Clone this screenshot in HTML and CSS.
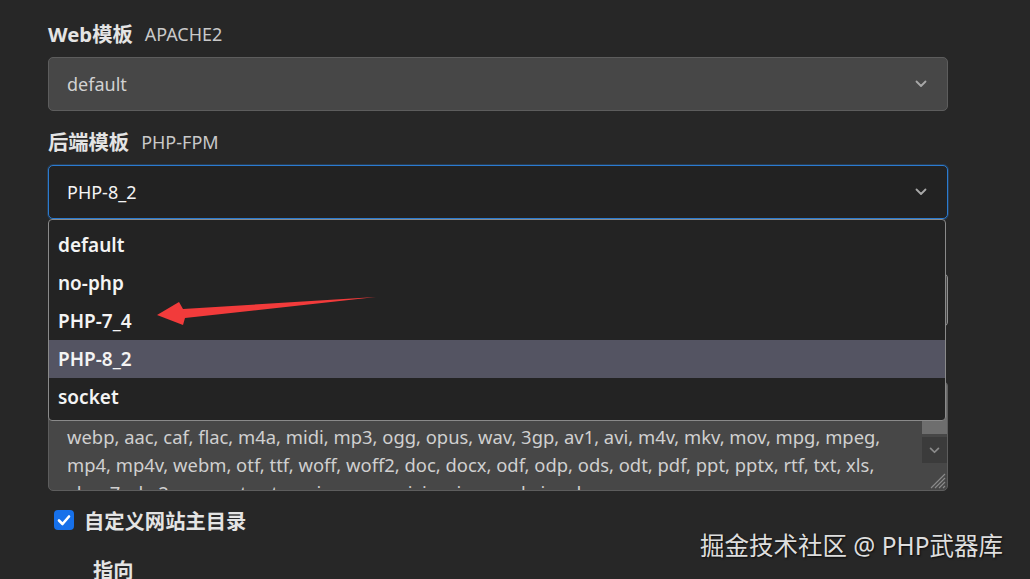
FILE: index.html
```html
<!DOCTYPE html>
<html lang="zh">
<head>
<meta charset="utf-8">
<title>站点配置</title>
<link rel="stylesheet" href="styles.css">
</head>
<body>
<main class="form">
  <div class="field">
    <div class="label"><b>Web模板</b><span class="hint">APACHE2</span></div>
    <div class="select select-plain">
      <span class="value">default</span>
      <svg class="chev" viewBox="0 0 12 8" width="12" height="8"><path d="M1.5 1.5 L6 6 L10.5 1.5" fill="none" stroke="currentColor" stroke-width="1.8" stroke-linecap="round" stroke-linejoin="round"/></svg>
    </div>
  </div>

  <div class="field">
    <div class="label"><b>后端模板</b><span class="hint">PHP-FPM</span></div>
    <div class="select-wrap">
      <div class="select select-focus">
        <span class="value">PHP-8_2</span>
        <svg class="chev" viewBox="0 0 12 8" width="12" height="8"><path d="M1.5 1.5 L6 6 L10.5 1.5" fill="none" stroke="currentColor" stroke-width="1.8" stroke-linecap="round" stroke-linejoin="round"/></svg>
      </div>
      <ul class="menu">
        <li>default</li>
        <li>no-php</li>
        <li>PHP-7_4</li>
        <li class="active">PHP-8_2</li>
        <li>socket</li>
      </ul>
    </div>
  </div>

  <div class="field">
    <div class="label"></div>
    <div class="input"></div>
  </div>

  <div class="field">
    <div class="label"></div>
    <div class="textarea">
      <div class="ta-text">
        <div class="line">webp, aac, caf, flac, m4a, midi, mp3, ogg, opus, wav, 3gp, av1, avi, m4v, mkv, mov, mpg, mpeg,</div>
        <div class="line">mp4, mp4v, webm, otf, ttf, woff, woff2, doc, docx, odf, odp, ods, odt, pdf, ppt, pptx, rtf, txt, xls,</div>
        <div class="line">xlsx, 7z, bz2, gz, rar, tar, tgz, zip, exe, msi, iso, img, apk, jar, dmg</div>
      </div>
      <div class="scrollbar">
        <div class="sb-thumb"></div>
        <div class="sb-btn">
          <svg viewBox="0 0 12 8" width="11" height="7"><path d="M1.5 1.5 L6 6 L10.5 1.5" fill="none" stroke="currentColor" stroke-width="2" stroke-linecap="round" stroke-linejoin="round"/></svg>
        </div>
      </div>
      <svg class="grip" viewBox="0 0 20 20" width="20" height="20"><path d="M19 5 L5 19 M19 9 L9 19 M19 13 L13 19 M19 17 L17 19" stroke="#8a8a8a" stroke-width="1.2"/></svg>
    </div>
  </div>

  <label class="check-row">
    <span class="checkbox">
      <svg viewBox="0 0 20 20" width="20" height="20"><path d="M5 10.5 L8.5 14 L15 6.5" fill="none" stroke="#fff" stroke-width="2.6" stroke-linecap="round" stroke-linejoin="round"/></svg>
    </span>
    <b>自定义网站主目录</b>
  </label>

  <div class="sub-label"><b>指向</b></div>
</main>

<svg class="arrow" viewBox="0 0 1030 579" width="1030" height="579">
  <polygon points="157,315 179,302 183,309 376,297 185,318 183,325" fill="#f23b3b"/>
</svg>

<div class="watermark">掘金技术社区 @ PHP武器库</div>
</body>
</html>
```

FILE: styles.css
```css
html, body {
  margin: 0;
  padding: 0;
  background: #272727;
}

body {
  font-family: "Noto Sans", "Noto Sans CJK SC", sans-serif;
  color: #e2e2e2;
  width: 1030px;
  height: 579px;
  overflow: hidden;
  position: relative;
}

.form {
  width: 900px;
  padding: 22px 0 0 48px;
  display: flex;
  flex-direction: column;
  gap: 19px;
}

.field {
  display: flex;
  flex-direction: column;
  gap: 11px;
}

.label {
  height: 24px;
  line-height: 24px;
  display: flex;
  align-items: center;
  gap: 12px;
  white-space: nowrap;
}

.label b, .check-row b, .sub-label b {
  font-size: 20.3px;
  font-weight: 700;
  color: #e4e4e4;
}

.hint {
  font-size: 18px;
  color: #c9c9c9;
  font-weight: 400;
}

.select, .input {
  box-sizing: border-box;
  height: 54px;
  border-radius: 5px;
  display: flex;
  align-items: center;
  justify-content: space-between;
  padding: 0 20px 0 18px;
  font-size: 18px;
}

.select-plain {
  background: #474747;
  border: 1px solid #5d5d5d;
  color: #d2d2d2;
}

.select-focus {
  background: #222222;
  border: 1px solid #2b7bd0;
  box-shadow: 0 0 0 1px rgba(43, 123, 208, 0.25);
  color: #f4f4f4;
}

.chev {
  color: #a8a8a8;
}

.select-wrap {
  position: relative;
}

.menu {
  position: absolute;
  top: 100%;
  left: 0;
  width: 898px;
  box-sizing: border-box;
  margin: 0;
  padding: 6px 0 4px;
  list-style: none;
  background: #232323;
  border: 1px solid #8a8a8a;
  border-radius: 4px;
  z-index: 5;
}

.menu li {
  height: 38px;
  line-height: 38px;
  padding-left: 9px;
  font-size: 19px;
  font-weight: 600;
  color: #f4f4f4;
}

.menu li.active {
  background: #545462;
}

.input {
  background: #474747;
  border: 1px solid #8f8f8f;
}

.textarea {
  box-sizing: border-box;
  height: 110px;
  background: #474747;
  border: 1px solid #5d5d5d;
  border-radius: 5px;
  position: relative;
  overflow: hidden;
  display: flex;
}

.ta-text {
  flex: 1;
  padding: 0 0 0 18px;
  margin-top: 41px;
  font-size: 18.4px;
  line-height: 28px;
  color: #d0d0d0;
  white-space: nowrap;
  overflow: hidden;
}

.scrollbar {
  width: 25px;
  display: flex;
  flex-direction: column;
}

.sb-thumb {
  height: 52px;
  background: #6e6e6e;
}

.sb-btn {
  margin-top: 3px;
  height: 26px;
  background: #3b3b3b;
  color: #8a8a8a;
  display: flex;
  align-items: center;
  justify-content: center;
}

.grip {
  position: absolute;
  right: 1px;
  bottom: 1px;
}

.check-row {
  display: flex;
  align-items: center;
  gap: 10px;
  height: 20px;
  padding-left: 6px;
}

.checkbox {
  width: 20px;
  height: 20px;
  border-radius: 4px;
  background: #1670ea;
  display: flex;
}

.sub-label {
  margin-top: 9px;
  padding-left: 45px;
  height: 24px;
  line-height: 24px;
}

.arrow {
  position: absolute;
  left: 0;
  top: 0;
  pointer-events: none;
  z-index: 10;
}

.watermark {
  position: absolute;
  right: 27px;
  top: 531px;
  font-size: 24.5px;
  line-height: 30px;
  color: #dedede;
  text-shadow: 1px 1px 2px rgba(0, 0, 0, 0.7);
  white-space: nowrap;
  z-index: 10;
}
```
